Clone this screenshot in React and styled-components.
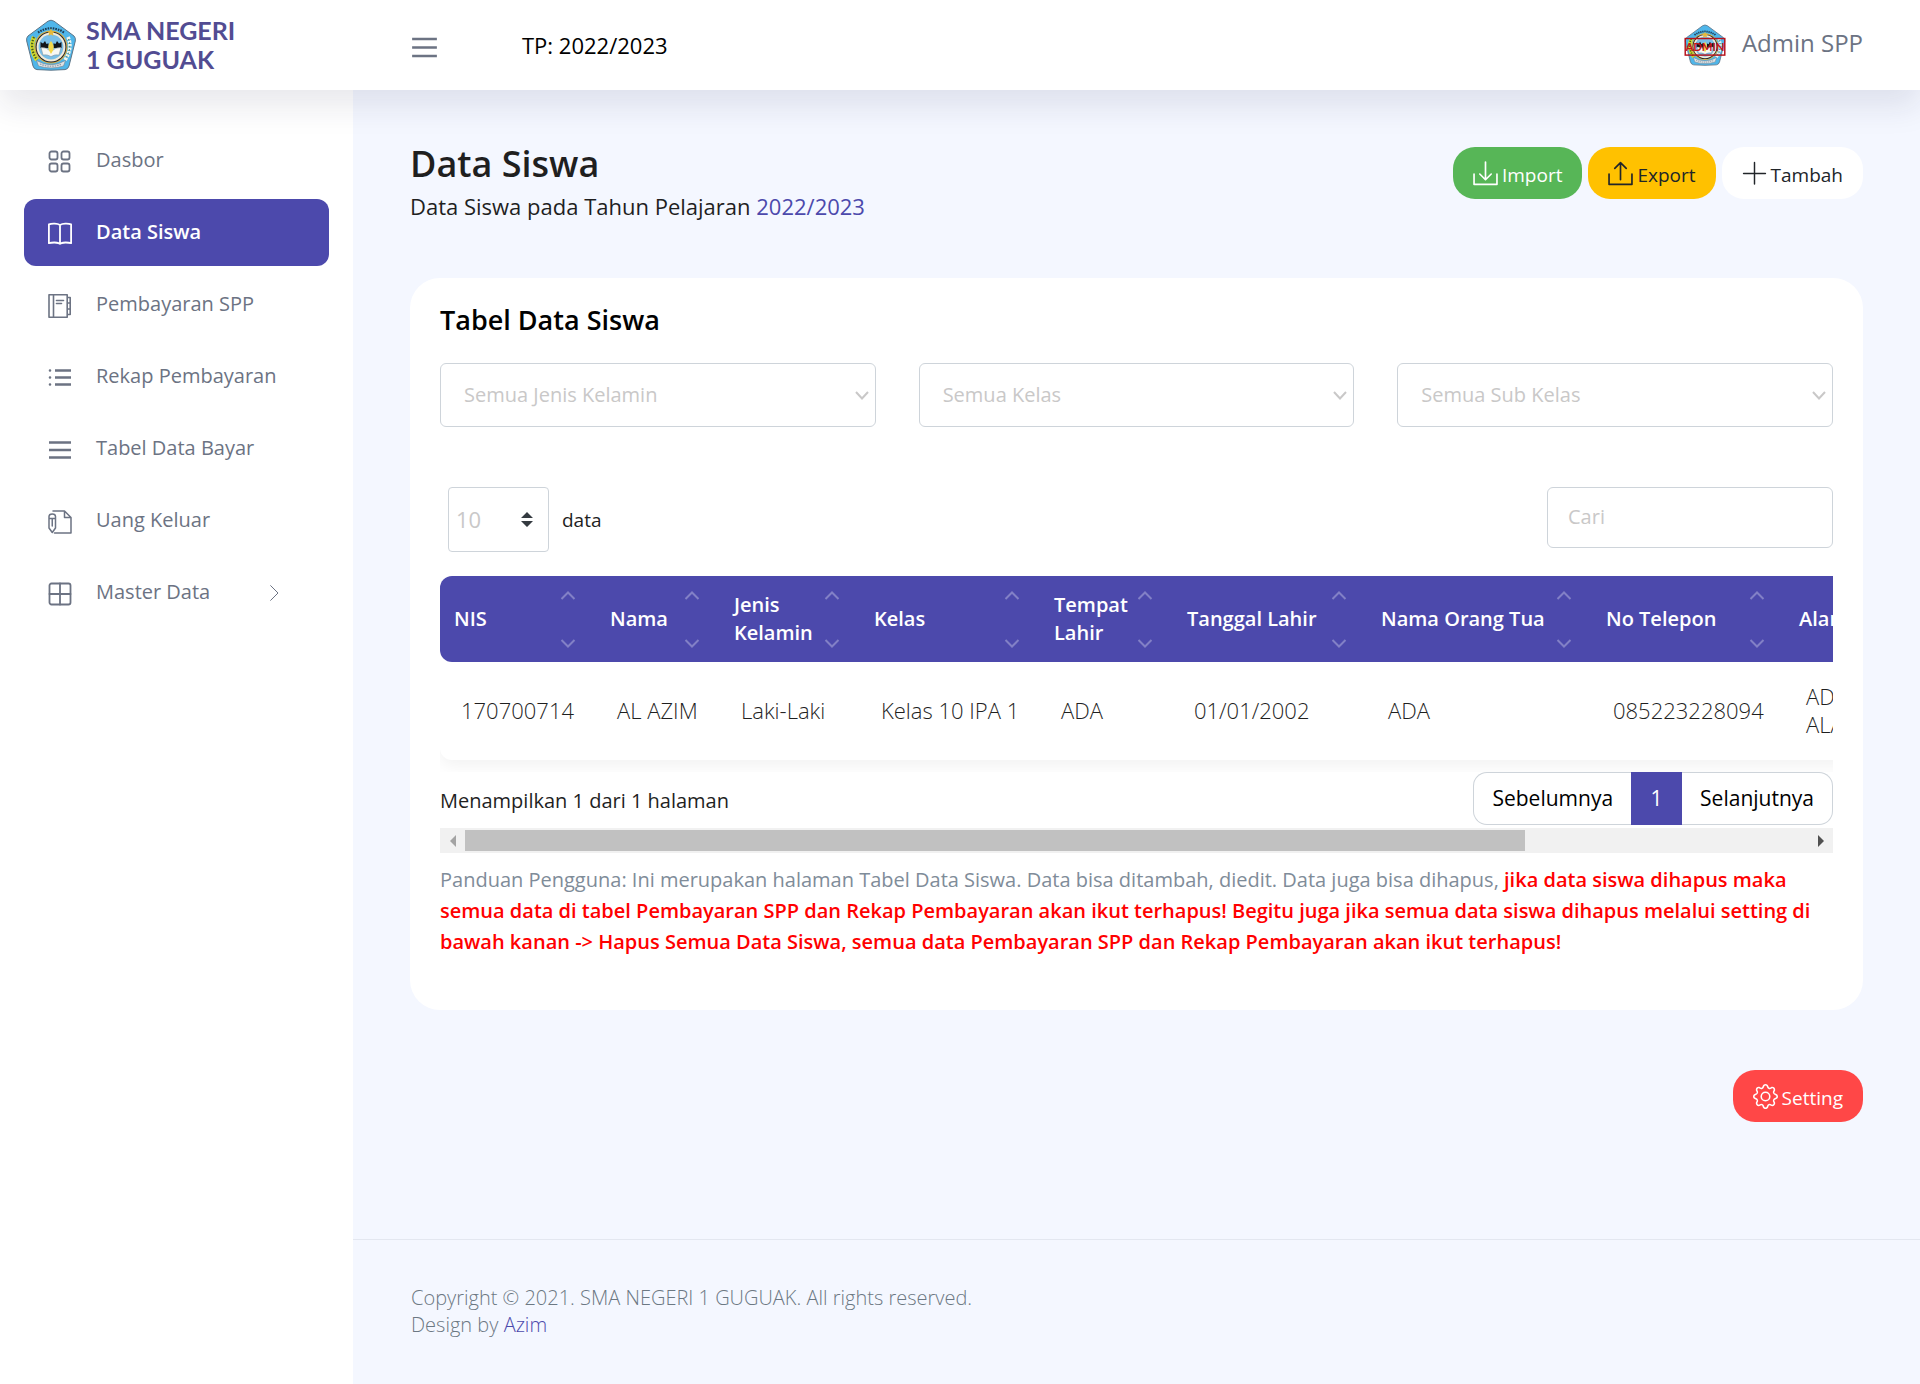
import React, { useEffect, useRef, useState } from 'react';
import styled, { createGlobalStyle, css } from 'styled-components';
import { BsGear, BsPencil } from 'react-icons/bs';

const color = {
  primary: '#4c49ac',
  page: '#f4f7ff',
  text: '#1f1f1f',
  menu: '#6c7383',
  border: '#ced4da',
  placeholder: '#c9c8c8',
};

const GlobalStyle = createGlobalStyle`
  *, *::before, *::after { box-sizing: border-box; }
  body {
    margin: 0;
    background: ${color.page};
    color: ${color.text};
    font-family: "Open Sans", "Noto Sans", sans-serif;
    font-size: 20px;
    font-weight: 400;
  }
  h1, h2, p, ul { margin: 0; padding: 0; }
  button, input, select { font: inherit; }
  a { color: ${color.primary}; text-decoration: none; }
  svg { display: block; flex: none; }
`;

/* ---------- Icons ---------- */

const Stroke = styled.svg.attrs({ viewBox: '0 0 24 24', 'aria-hidden': true })`
  width: ${(p) => p.$size || 24}px;
  height: ${(p) => p.$size || 24}px;
  fill: none;
  stroke: currentColor;
  stroke-width: ${(p) => p.$weight || 1.5};
  stroke-linecap: round;
  stroke-linejoin: round;
`;

const IconGrid = () => (
  <Stroke $weight={1.8}>
    <rect x="1.500" y="1.500" width="8" height="8" rx="2" />
    <rect x="13.5" y="1.500" width="8" height="8" rx="2" />
    <rect x="1.500" y="13.5" width="8" height="8" rx="2" />
    <rect x="13.5" y="13.5" width="8" height="8" rx="2" />
  </Stroke>
);

const IconBook = () => (
  <Stroke $weight={1.8}>
    <path d="M12 3C9.500 1.500 4 1.300 .9 2.400V21.200c3-.9 8-.9 9.600-.1.500.9 2.500.9 3 0 1.600-.8 6.600-.8 9.600.1V2.400C20 1.300 14.500 1.500 12 3zM12 3V21" />
  </Stroke>
);

const IconLedger = () => (
  <Stroke $weight={1.6}>
    <path d="M1 .8H19.200V23.200H1zM5.500 .8V23.200M8.500 6.500h7M8.500 9.500h5M19.200 3.500h3v17h-3M19.200 9h3M19.200 15h3" />
  </Stroke>
);

const IconList = () => (
  <Stroke $weight={2.6}>
    <path strokeLinecap="butt" d="M7 4.500h16M7 11.500h16M7 18.500h16" />
    <path d="M2 4.500h.01M2 11.500h.01M2 18.500h.01" />
  </Stroke>
);

const IconBars = ({ size }) => (
  <Stroke $size={size} $weight={2.3}>
    <path strokeLinecap="butt" d="M1 4.500h22M1 12h22M1 19.500h22" />
  </Stroke>
);

const IconPenPage = () => (
  <Stroke $weight={1.5}>
    <path d="M5 1H16.500L23 7.500V23H6.500M16.500 1V7.500H23" />
    <path d="M1 6.500C1 3 7.500 3 7.500 6.500V18L4.250 22.500 1 18zM1 8.500h6.500M4.250 9v7" />
  </Stroke>
);

const IconWindow = () => (
  <Stroke $weight={1.8}>
    <rect x="1.500" y="1.500" width="21" height="21" rx="2" />
    <path d="M12 1.500V22.500M1.500 12H22.500" />
  </Stroke>
);

const IconImport = () => (
  <Stroke $size={25} $weight={1.6}>
    <path d="M1 12.500V22.500H23V12.500M12 1V18M6.500 12.500L12 18l5.500-5.500" />
  </Stroke>
);

const IconExport = () => (
  <Stroke $size={25} $weight={1.6}>
    <path d="M1 12.500V22.500H23V12.500M12 18V1.500M6.500 7L12 1.500 17.500 7" />
  </Stroke>
);

const IconPlus = () => (
  <Stroke $size={25} $weight={1.4}>
    <path d="M12 1.500V22M1.500 12H22.500" />
  </Stroke>
);

const Chevron = styled.svg.attrs({ viewBox: '0 0 16 9', 'aria-hidden': true })`
  width: 16px;
  height: 9px;
  fill: none;
  stroke: currentColor;
  stroke-width: 2;
`;

const Emblem = ({ label, stamp }) => (
  <svg viewBox="0 0 52 52" width="100%" height="100%" role="img" aria-label={label}>
    <path d="M23 2.200Q26 .2 29 2.200L49 17Q51 19 50.300 22L44 47Q43 50.300 40 50.600Q26 51.800 12 50.600Q9 50.300 8 47L1.700 22Q1 19 3 17z" fill="#4fb6ea" stroke="#5d7486" strokeWidth="1" />
    <path d="M13 13.500Q26 5 39 13.500" fill="none" stroke="#1d3c52" strokeWidth="2.200" strokeDasharray="1.600 1" />
    <path d="M9 18Q4 29 12 41" fill="none" stroke="#d8dc2c" strokeWidth="4.400" />
    <path d="M9 18Q4 29 12 41" fill="none" stroke="#445f1d" strokeWidth="2.200" strokeDasharray="1.500 1.500" />
    <path d="M43 18Q48 29 40 41" fill="none" stroke="#f2f5ee" strokeWidth="3.600" strokeDasharray="2.600 1" />
    <path d="M43.500 20Q47 29 41 39" fill="none" stroke="#3a6f43" strokeWidth="1" strokeDasharray="1.500 2" />
    <circle cx="26" cy="28" r="16.500" fill="#d8b24a" />
    <circle cx="26" cy="28" r="15.400" fill="#20242c" />
    <circle cx="26" cy="28" r="14.400" fill="#f3ead8" />
    <circle cx="26" cy="28" r="12.400" fill="#79bfe8" />
    <path d="M26 9.500l1.200 2.600 2.800.3-2.100 1.900.6 2.700-2.500-1.400-2.500 1.400.6-2.700-2.100-1.900 2.800-.3z" fill="#e5b93c" />
    <path d="M15.500 23l2.500 1.500 2-2.500 1.500 3 2-.8v4.800h-8z" fill="#12151a" />
    <path d="M36.500 23l-2.500 1.500-2-2.500-1.500 3-2-.8v4.800h8z" fill="#12151a" />
    <path d="M16 28.500q5.500-.5 10 4 4.500-4.500 10-4l-2 7.500q-4-1-8 1.500-4-2.500-8-1.500z" fill="#f8f8f4" stroke="#7b8790" strokeWidth=".5" />
    <path d="M26 22q4 5 2 9.500l-2 3.500-2-3.500q-2-4.500 2-9.500z" fill="#f4d84a" />
    <path d="M11.500 41.500Q26 50 40.500 41.500L38.500 47Q26 51 13.500 47z" fill="#dfe3e6" stroke="#77838d" strokeWidth=".6" />
    <path d="M15 45Q26 49.500 37 45" fill="none" stroke="#8e979f" strokeWidth="1.200" strokeDasharray="1.500 1" />
    {stamp && (
      <g>
        <rect x="1.500" y="18" width="49" height="20.500" fill="none" stroke="#b5121b" strokeWidth="1.800" />
        <text x="26" y="33.500" textAnchor="middle" fontFamily="Lato, sans-serif" fontSize="14" fontWeight="700" fill="#c4151c">{stamp}</text>
      </g>
    )}
  </svg>
);

/* ---------- Header ---------- */

const Header = styled.header`
  position: relative;
  z-index: 1;
  display: flex;
  align-items: center;
  height: 90px;
  padding-right: 57px;
  background: #fff;
  box-shadow: 0 16px 32px rgba(30, 30, 70, 0.1);
`;

const Brand = styled.a`
  display: flex;
  align-items: center;
  gap: 9px;
  width: 411px;
  padding-left: 25px;
  color: #524c92;
  font-family: Lato, "Open Sans", sans-serif;
  font-size: 25px;
  font-weight: 700;
  line-height: 29px;
`;

const BrandMark = styled.span`
  width: 52px;
  height: 52px;
`;

const MenuButton = styled.button`
  padding: 4px 0 0;
  border: 0;
  background: none;
  color: ${color.menu};
  cursor: pointer;
`;

const Period = styled.span`
  margin-left: 84px;
  color: #000;
  font-size: 22px;
`;

const Account = styled.a`
  display: flex;
  align-items: center;
  gap: 16px;
  margin-left: auto;
  color: ${color.menu};
  font-size: 24px;
`;

const Avatar = styled.span`
  width: 42px;
  height: 42px;
`;

const AccountName = styled.span`
  padding-bottom: 6px;
`;

/* ---------- Frame and sidebar ---------- */

const Page = styled.div`
  display: flex;
  flex-direction: column;
  min-height: 100vh;
`;

const Body = styled.div`
  display: flex;
  flex: 1;
`;

const Sidebar = styled.nav`
  flex: none;
  width: 353px;
  padding: 37px 24px;
  background: #fff;
`;

const Menu = styled.ul`
  display: flex;
  flex-direction: column;
  gap: 5px;
  list-style: none;
`;

const MenuLink = styled.a`
  display: flex;
  align-items: center;
  gap: 24px;
  height: 67px;
  padding: 0 47px 0 24px;
  border-radius: 12px;
  color: ${color.menu};
  ${(p) => p.$active && css`
    background: ${color.primary};
    color: #fff;
    font-weight: 600;
  `}
`;

const MenuIcon = styled.span`
  padding-top: 3px;
`;

const MenuText = styled.span`
  flex: 1;
  padding-bottom: 2px;
`;

const Main = styled.div`
  display: flex;
  flex: 1;
  flex-direction: column;
  min-width: 0;
`;

const Content = styled.main`
  padding: 54px 57px 117px;
`;

const Footer = styled.footer`
  margin-top: auto;
  padding: 44px 58px 46px;
  border-top: 1px solid #e3e7f0;
  color: #6c7883;
  font-weight: 300;
  line-height: 27px;
`;

/* ---------- Page heading ---------- */

const PageHead = styled.div`
  display: flex;
  justify-content: space-between;
  align-items: flex-start;
  margin-bottom: 50px;
`;

const Title = styled.h1`
  font-size: 36px;
  font-weight: 600;
  line-height: 40px;
`;

const Subtitle = styled.p`
  font-size: 22px;
  line-height: 44px;
`;

const Actions = styled.div`
  display: flex;
  gap: 6px;
  padding-top: 3px;
`;

const tones = {
  green: css`background: #57b657; color: #fff;`,
  amber: css`background: #ffc100; color: #212529;`,
  white: css`background: #fff; color: #212529;`,
  red: css`background: #ff4747; color: #fff;`,
};

const PillButton = styled.button`
  display: flex;
  align-items: center;
  gap: 4px;
  height: 52px;
  padding: 0 20px;
  border: 0;
  border-radius: 22px;
  font-size: 19px;
  cursor: pointer;
  ${(p) => tones[p.$tone]}
  span { padding-top: 4px; }
`;

const SettingRow = styled.div`
  display: flex;
  justify-content: flex-end;
  margin-top: 60px;
`;

/* ---------- Card ---------- */

const Card = styled.section`
  padding: 22px 30px 53px;
  border-radius: 30px;
  background: #fff;
`;

const CardTitle = styled.h2`
  color: #010101;
  font-size: 27px;
  font-weight: 600;
  line-height: 40px;
`;

const Filters = styled.div`
  display: grid;
  grid-template-columns: repeat(3, 1fr);
  gap: 43px;
  margin-top: 23px;
`;

const SelectBox = styled.div`
  display: grid;
  grid-template: 1fr / 1fr;
  align-items: center;
  color: ${color.placeholder};
  > * { grid-area: 1 / 1; }
  > svg { justify-self: end; margin-right: ${(p) => p.$inset}px; pointer-events: none; }
`;

const Select = styled.select`
  width: 100%;
  height: 64px;
  padding: 0 23px 2px;
  border: 1px solid ${color.border};
  border-radius: 6px;
  background: #fff;
  color: ${color.placeholder};
  appearance: none;
`;

const Toolbar = styled.div`
  display: flex;
  align-items: flex-start;
  justify-content: space-between;
  height: 65px;
  margin: 60px 0 24px;
`;

const LengthLabel = styled.label`
  display: flex;
  align-items: center;
  gap: 13px;
  padding-left: 8px;
  font-size: 19px;
`;

const LengthSelect = styled(Select)`
  width: 101px;
  height: 65px;
  padding: 0 7px 2px;
  border-radius: 4px;
  font-size: 22px;
`;

const Search = styled.input`
  width: 286px;
  height: 61px;
  padding: 0 20px 2px;
  border: 1px solid ${color.border};
  border-radius: 6px;
  background: #fff;
  &::placeholder { color: ${color.placeholder}; opacity: 1; }
`;

/* ---------- Table ---------- */

const Viewport = styled.div`
  overflow: hidden;
  padding-bottom: 12px;
`;

const Table = styled.table`
  width: 1765px;
  border-radius: 12px;
  border-spacing: 0;
  table-layout: fixed;
  box-shadow: 0 6px 16px rgba(0, 0, 0, 0.05);
`;

const Th = styled.th`
  width: ${(p) => p.$width}px;
  height: 86px;
  padding: 0 20px 0 14px;
  background: ${color.primary};
  color: #fff;
  font-weight: 600;
  line-height: 28px;
  text-align: left;
  &:first-child { border-radius: 12px 0 0 12px; }
  &:last-child { border-radius: 0 12px 12px 0; }
`;

const ThInner = styled.div`
  display: flex;
  align-items: center;
  justify-content: space-between;
`;

const SortButton = styled.button`
  display: flex;
  flex: none;
  flex-direction: column;
  justify-content: space-between;
  height: 57px;
  padding: 0;
  border: 0;
  background: none;
  color: #8280c6;
  cursor: pointer;
`;

const Td = styled.td`
  height: 98px;
  padding: 0 21px 2px;
  font-size: 22px;
  font-weight: 300;
  line-height: 28px;
  white-space: ${(p) => (p.$wrap ? 'normal' : 'nowrap')};
`;

const EditButton = styled.button`
  padding: 10px;
  border: 0;
  border-radius: 10px;
  background: ${color.primary};
  color: #fff;
`;

const TableFoot = styled.div`
  display: flex;
  align-items: center;
  justify-content: space-between;
  height: 53px;
`;

const Summary = styled.span`
  padding-top: 3px;
`;

const Pagination = styled.div`
  display: flex;
  height: 53px;
`;

const PageButton = styled.button`
  padding: 0 18px 2px;
  border: 1px solid ${color.border};
  background: #fff;
  color: #000;
  font-size: 21px;
  cursor: pointer;
  &:first-child { border-right: 0; border-radius: 14px 0 0 14px; }
  &:last-child { border-left: 0; border-radius: 0 14px 14px 0; }
  ${(p) => p.$current && css`
    width: 51px;
    border-color: ${color.primary};
    background: ${color.primary};
    color: #fff;
  `}
`;

const ScrollBar = styled.div`
  display: flex;
  align-items: center;
  height: 25px;
  margin: 3px 0 11px;
  background: #f1f1f1;
`;

const ScrollTrack = styled.div`
  flex: 1;
`;

const ScrollThumb = styled.div`
  height: 21px;
  background: #c1c1c1;
`;

const ScrollButton = styled.button`
  display: grid;
  place-items: center;
  width: 25px;
  height: 25px;
  padding: 0;
  border: 0;
  background: none;
  color: #505050;
  &:disabled { color: #a3a3a3; }
`;

const Guide = styled.p`
  color: #7f8c99;
  line-height: 31px;
`;

const Warning = styled.strong`
  color: #f00;
  font-weight: 600;
`;

/* ---------- Data ---------- */

const menu = [
  { label: 'Dasbor', icon: <IconGrid /> },
  { label: 'Data Siswa', icon: <IconBook />, active: true },
  { label: 'Pembayaran SPP', icon: <IconLedger /> },
  { label: 'Rekap Pembayaran', icon: <IconList /> },
  { label: 'Tabel Data Bayar', icon: <IconBars /> },
  { label: 'Uang Keluar', icon: <IconPenPage /> },
  { label: 'Master Data', icon: <IconWindow />, nested: true },
];

const filters = ['Semua Jenis Kelamin', 'Semua Kelas', 'Semua Sub Kelas'];

const columns = [
  { label: 'NIS', width: 156 },
  { label: 'Nama', width: 124 },
  { label: 'Jenis Kelamin', width: 140 },
  { label: 'Kelas', width: 180 },
  { label: 'Tempat Lahir', width: 133 },
  { label: 'Tanggal Lahir', width: 194 },
  { label: 'Nama Orang Tua', width: 225 },
  { label: 'No Telepon', width: 193 },
  { label: 'Alamat', width: 140 },
];

const students = [
  ['170700714', 'AL AZIM', 'Laki-Laki', 'Kelas 10 IPA 1', 'ADA', '01/01/2002', 'ADA', '085223228094', 'ADA ALAMAT'],
];

/* ---------- Student table ---------- */

function StudentTable() {
  const viewport = useRef(null);
  const [scroll, setScroll] = useState({ left: 0, view: 1, total: 1 });

  const measure = () => {
    const el = viewport.current;
    setScroll({ left: el.scrollLeft, view: el.clientWidth, total: el.scrollWidth });
  };

  useEffect(() => {
    measure();
    window.addEventListener('resize', measure);
    return () => window.removeEventListener('resize', measure);
  }, []);

  const move = (step) => {
    viewport.current.scrollLeft += step;
    measure();
  };

  return (
    <>
      <Viewport ref={viewport} onScroll={measure}>
        <Table>
          <thead>
            <tr>
              {columns.map((c) => (
                <Th key={c.label} $width={c.width} scope="col">
                  <ThInner>
                    {c.label}
                    <SortButton type="button" aria-label={`Urutkan ${c.label}`}>
                      <Chevron><path d="M1.500 8L8 1.500 14.500 8" /></Chevron>
                      <Chevron><path d="M1.500 1L8 7.500 14.500 1" /></Chevron>
                    </SortButton>
                  </ThInner>
                </Th>
              ))}
              <Th scope="col" aria-label="Aksi" />
            </tr>
          </thead>
          <tbody>
            {students.map((row) => (
              <tr key={row[0]}>
                {row.map((value, i) => (
                  <Td key={columns[i].label} $wrap={columns[i].label === 'Alamat'}>{value}</Td>
                ))}
                <Td><EditButton type="button" aria-label="Edit"><BsPencil /></EditButton></Td>
              </tr>
            ))}
          </tbody>
        </Table>
      </Viewport>
      <TableFoot>
        <Summary>Menampilkan 1 dari 1 halaman</Summary>
        <Pagination>
          <PageButton type="button">Sebelumnya</PageButton>
          <PageButton type="button" $current aria-current="page">1</PageButton>
          <PageButton type="button">Selanjutnya</PageButton>
        </Pagination>
      </TableFoot>
      <ScrollBar>
        <ScrollButton type="button" aria-label="Geser ke kiri" disabled={scroll.left === 0} onClick={() => move(-120)}>
          <svg width="6" height="12" viewBox="0 0 6 12"><path d="M6 0V12L0 6z" fill="currentColor" /></svg>
        </ScrollButton>
        <ScrollTrack>
          <ScrollThumb
            style={{
              width: `${(scroll.view / scroll.total) * 100}%`,
              marginLeft: `${(scroll.left / scroll.total) * 100}%`,
            }}
          />
        </ScrollTrack>
        <ScrollButton type="button" aria-label="Geser ke kanan" onClick={() => move(120)}>
          <svg width="6" height="12" viewBox="0 0 6 12"><path d="M0 0V12L6 6z" fill="currentColor" /></svg>
        </ScrollButton>
      </ScrollBar>
    </>
  );
}

export default function App() {
  return (
    <Page>
      <GlobalStyle />
      <Header>
        <Brand href="#">
          <BrandMark><Emblem label="Logo sekolah" /></BrandMark>
          <span>SMA NEGERI<br />1 GUGUAK</span>
        </Brand>
        <MenuButton type="button" aria-label="Menu"><IconBars size={27} /></MenuButton>
        <Period>TP: 2022/2023</Period>
        <Account href="#">
          <Avatar><Emblem label="Foto admin" stamp="ADMIN" /></Avatar>
          <AccountName>Admin SPP</AccountName>
        </Account>
      </Header>
      <Body>
        <Sidebar>
          <Menu>
            {menu.map((m) => (
              <li key={m.label}>
                <MenuLink href="#" $active={m.active} aria-current={m.active ? 'page' : undefined}>
                  <MenuIcon>{m.icon}</MenuIcon>
                  <MenuText>{m.label}</MenuText>
                  {m.nested && <Stroke $size={16}><path d="M7 1l11 11L7 23" /></Stroke>}
                </MenuLink>
              </li>
            ))}
          </Menu>
        </Sidebar>
        <Main>
          <Content>
            <PageHead>
              <div>
                <Title>Data Siswa</Title>
                <Subtitle>Data Siswa pada Tahun Pelajaran <a href="#">2022/2023</a></Subtitle>
              </div>
              <Actions>
                <PillButton type="button" $tone="green"><IconImport /><span>Import</span></PillButton>
                <PillButton type="button" $tone="amber"><IconExport /><span>Export</span></PillButton>
                <PillButton type="button" $tone="white"><IconPlus /><span>Tambah</span></PillButton>
              </Actions>
            </PageHead>
            <Card>
              <CardTitle>Tabel Data Siswa</CardTitle>
              <Filters>
                {filters.map((f) => (
                  <SelectBox key={f} $inset={6}>
                    <Select aria-label={f} defaultValue={f}><option>{f}</option></Select>
                    <Chevron><path d="M2 1L8 7.500 14 1" /></Chevron>
                  </SelectBox>
                ))}
              </Filters>
              <Toolbar>
                <LengthLabel>
                  <SelectBox $inset={16}>
                    <LengthSelect defaultValue="10">
                      <option>10</option>
                      <option>25</option>
                      <option>50</option>
                    </LengthSelect>
                    <svg width="12" height="15" viewBox="0 0 12 15" aria-hidden="true">
                      <path d="M6 0L12 6H0zM0 9H12L6 15z" fill="#343a40" />
                    </svg>
                  </SelectBox>
                  data
                </LengthLabel>
                <Search type="search" placeholder="Cari" aria-label="Cari" />
              </Toolbar>
              <StudentTable />
              <Guide>
                Panduan Pengguna: Ini merupakan halaman Tabel Data Siswa. Data bisa ditambah, diedit. Data juga bisa dihapus,{' '}
                <Warning>
                  jika data siswa dihapus maka semua data di tabel Pembayaran SPP dan Rekap Pembayaran akan ikut terhapus! Begitu juga jika semua data siswa dihapus melalui setting di bawah kanan -&gt; Hapus Semua Data Siswa, semua data Pembayaran SPP dan Rekap Pembayaran akan ikut terhapus!
                </Warning>
              </Guide>
            </Card>
            <SettingRow>
              <PillButton type="button" $tone="red"><BsGear size={25} /><span>Setting</span></PillButton>
            </SettingRow>
          </Content>
          <Footer>
            <p>Copyright © 2021. SMA NEGERI 1 GUGUAK. All rights reserved.</p>
            <p>Design by <a href="#">Azim</a></p>
          </Footer>
        </Main>
      </Body>
    </Page>
  );
}
